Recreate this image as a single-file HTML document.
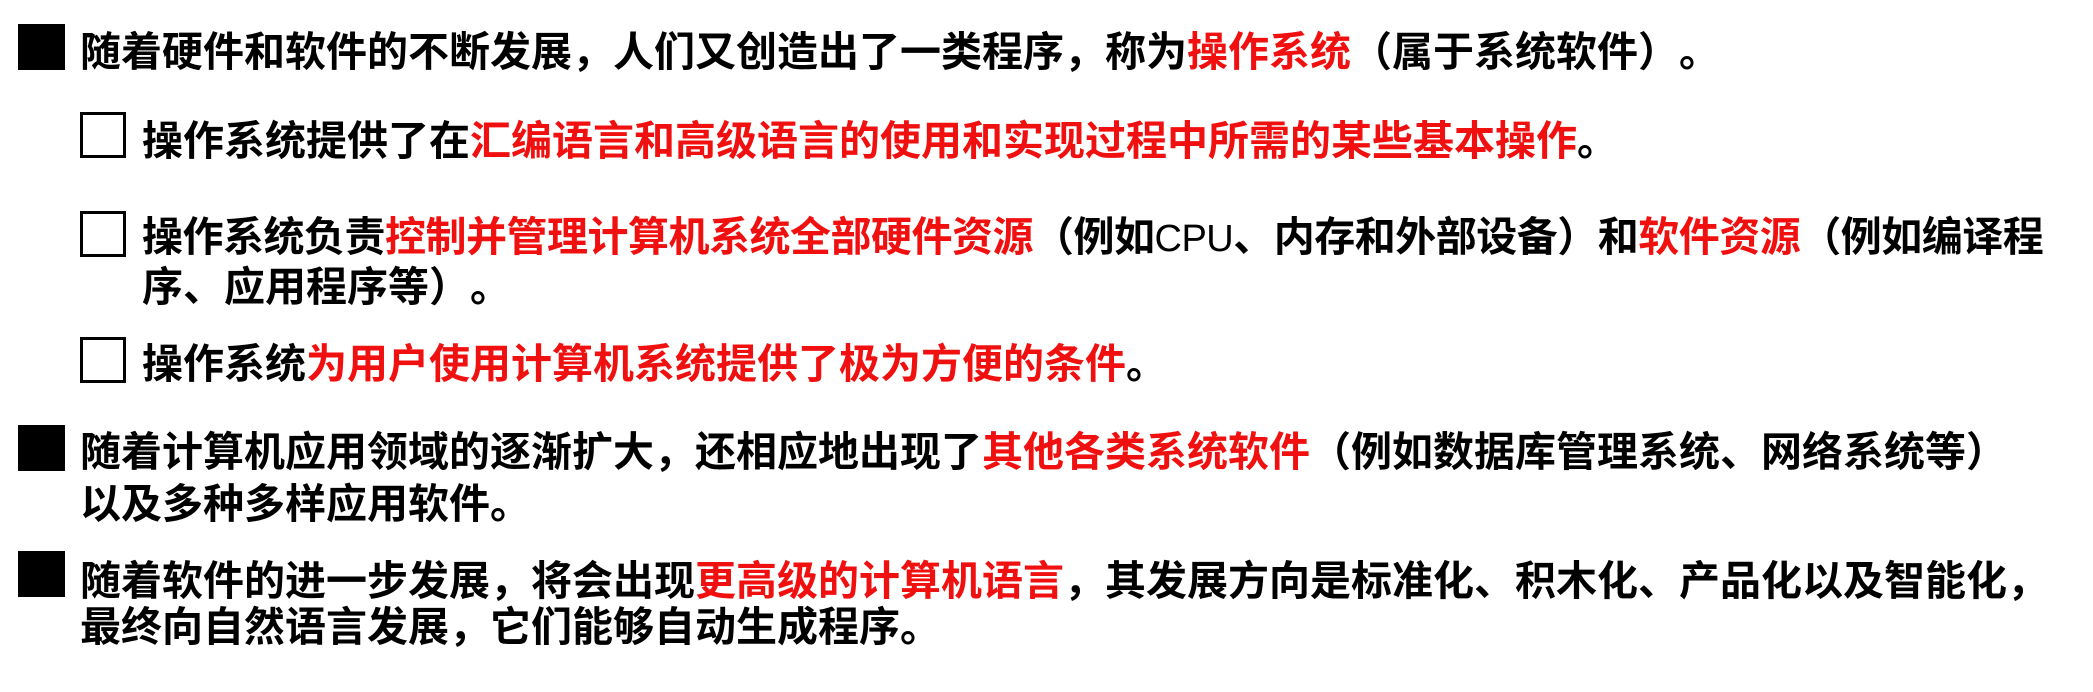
<!DOCTYPE html>
<html><head><meta charset="utf-8"><style>
html,body{margin:0;padding:0;background:#fff;width:2093px;height:692px;overflow:hidden;position:relative}
.t{position:absolute;font-family:"Noto Sans CJK SC","Liberation Sans",sans-serif;font-weight:bold;font-size:41px;line-height:50px;height:50px;white-space:nowrap;color:#000;font-kerning:none;font-feature-settings:"palt" 0,"halt" 0;text-spacing-trim:space-all}
.r{color:#f01010}
.l{font-family:"Liberation Sans",sans-serif;font-weight:normal;font-size:38px}
.sq{position:absolute;background:#000;width:47px;height:46px}
.cb{position:absolute;border:3px solid #000;width:40px;height:40px;box-sizing:content-box;background:#fff}
</style></head><body>
<div class="sq" style="left:18px;top:24px"></div>
<div class="t" style="left:80px;top:23px">随着硬件和软件的不断发展，人们又创造出了一类程序，称为<span class="r">操作系统</span>（属于系统软件）。</div>

<div class="cb" style="left:80px;top:112px"></div>
<div class="t" style="left:142px;top:112px">操作系统提供了在<span class="r">汇编语言和高级语言的使用和实现过程中所需的某些基本操作</span>。</div>

<div class="cb" style="left:80px;top:211px"></div>
<div class="t" style="left:142px;top:208px;letter-spacing:-0.5px">操作系统负责<span class="r">控制并管理计算机系统全部硬件资源</span>（例如<span class="l">CPU</span>、内存和外部设备）和<span class="r">软件资源</span>（例如编译程</div>
<div class="t" style="left:142px;top:258px">序、应用程序等）。</div>

<div class="cb" style="left:80px;top:337px"></div>
<div class="t" style="left:142px;top:335px">操作系统<span class="r">为用户使用计算机系统提供了极为方便的条件</span>。</div>

<div class="sq" style="left:18px;top:425px"></div>
<div class="t" style="left:80px;top:423px">随着计算机应用领域的逐渐扩大，还相应地出现了<span class="r">其他各类系统软件</span>（例如数据库管理系统、网络系统等）</div>
<div class="t" style="left:80px;top:475px">以及多种多样应用软件。</div>

<div class="sq" style="left:18px;top:551px"></div>
<div class="t" style="left:80px;top:552px">随着软件的进一步发展，将会出现<span class="r">更高级的计算机语言</span>，其发展方向是标准化、积木化、产品化以及智能化，</div>
<div class="t" style="left:80px;top:598px">最终向自然语言发展，它们能够自动生成程序。</div>
</body></html>
